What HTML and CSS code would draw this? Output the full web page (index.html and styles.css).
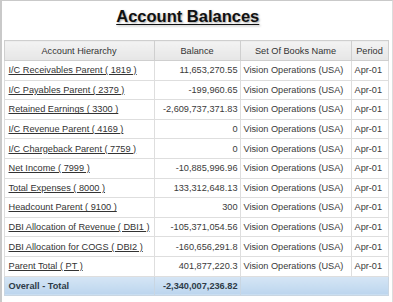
FILE: index.html
```html
<!DOCTYPE html>
<html>
<head>
<meta charset="utf-8">
<link rel="stylesheet" href="styles.css">
</head>
<body>
<div class="frame">
  <h1 class="title"><span>Account Balances</span></h1>
  <table class="grid">
    <colgroup>
      <col class="c1"><col class="c2"><col class="c3"><col class="c4">
    </colgroup>
    <thead>
      <tr><th>Account Hierarchy</th><th>Balance</th><th>Set Of Books Name</th><th>Period</th></tr>
    </thead>
    <tbody>
      <tr><td><a href="#">I/C Receivables Parent ( 1819 )</a></td><td class="num">11,653,270.55</td><td>Vision Operations (USA)</td><td>Apr-01</td></tr>
      <tr><td><a href="#">I/C Payables Parent ( 2379 )</a></td><td class="num">-199,960.65</td><td>Vision Operations (USA)</td><td>Apr-01</td></tr>
      <tr><td><a href="#">Retained Earnings ( 3300 )</a></td><td class="num">-2,609,737,371.83</td><td>Vision Operations (USA)</td><td>Apr-01</td></tr>
      <tr><td><a href="#">I/C Revenue Parent ( 4169 )</a></td><td class="num">0</td><td>Vision Operations (USA)</td><td>Apr-01</td></tr>
      <tr><td><a href="#">I/C Chargeback Parent ( 7759 )</a></td><td class="num">0</td><td>Vision Operations (USA)</td><td>Apr-01</td></tr>
      <tr><td><a href="#">Net Income ( 7999 )</a></td><td class="num">-10,885,996.96</td><td>Vision Operations (USA)</td><td>Apr-01</td></tr>
      <tr><td><a href="#">Total Expenses ( 8000 )</a></td><td class="num">133,312,648.13</td><td>Vision Operations (USA)</td><td>Apr-01</td></tr>
      <tr><td><a href="#">Headcount Parent ( 9100 )</a></td><td class="num">300</td><td>Vision Operations (USA)</td><td>Apr-01</td></tr>
      <tr><td><a href="#">DBI Allocation of Revenue ( DBI1 )</a></td><td class="num">-105,371,054.56</td><td>Vision Operations (USA)</td><td>Apr-01</td></tr>
      <tr><td><a href="#">DBI Allocation for COGS ( DBI2 )</a></td><td class="num">-160,656,291.8</td><td>Vision Operations (USA)</td><td>Apr-01</td></tr>
      <tr><td><a href="#">Parent Total ( PT )</a></td><td class="num">401,877,220.3</td><td>Vision Operations (USA)</td><td>Apr-01</td></tr>
    </tbody>
    <tfoot>
      <tr><td>Overall - Total</td><td class="num">-2,340,007,236.82</td><td colspan="2"></td></tr>
    </tfoot>
  </table>
</div>
</body>
</html>
```

FILE: styles.css
```css
html, body {
  margin: 0;
  padding: 0;
  background: #ffffff;
}

body {
  font-family: "Liberation Sans", Arial, sans-serif;
  color: #333;
}

.frame {
  border-top: 1px solid #c9c9c9;
  border-left: 2px solid #c9c9c9;
  border-right: 1px solid #dcdcdc;
  height: 100vh;
  box-sizing: border-box;
  padding: 0 0 0 1.5px;
  overflow: hidden;
}

.title {
  margin: 5px 20px 0 0;
  height: 20px;
  line-height: 20px;
  font-size: 16.5px;
  font-weight: bold;
  text-align: center;
  color: #111;
}

.title span {
  text-decoration: underline;
  text-underline-offset: 2px;
  text-shadow: 1px 1px 2px rgba(0, 0, 0, 0.35);
}

.grid {
  margin-top: 14px;
  border-collapse: collapse;
  table-layout: fixed;
  width: 384px;
  font-size: 9.2px;
}

.c1 { width: 150px; }
.c2 { width: 86px; }
.c3 { width: 111px; }
.c4 { width: 37px; }

.grid th {
  height: 19px;
  padding: 0;
  font-weight: normal;
  color: #333;
  text-align: center;
  background: linear-gradient(#f3f3f3, #e6e6e6);
  border: 1px solid #cfcfcf;
}

.grid td {
  height: 18.6px;
  padding: 0 2px 0 3px;
  border: 1px solid #dedede;
  white-space: nowrap;
  overflow: hidden;
  color: #3a3a3a;
}

.grid td:first-child {
  padding-left: 4px;
}

.grid td.num {
  text-align: right;
  padding-right: 2px;
}

.grid a {
  color: #333;
  text-decoration: underline;
}

.grid tfoot td {
  height: 18px;
  font-weight: bold;
  color: #2e3b48;
  background: linear-gradient(#d6e6f5, #bcd5ee);
  border: 1px solid #c9d6e2;
}
```
